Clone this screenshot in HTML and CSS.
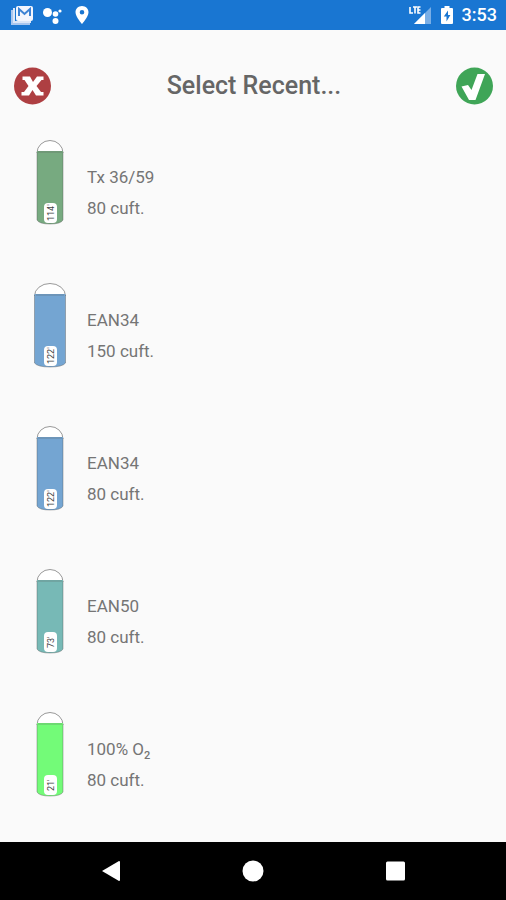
FILE: index.html
```html
<!DOCTYPE html>
<html lang="en">
<head>
<meta charset="utf-8">
<meta name="viewport" content="width=device-width, initial-scale=1">
<title>Select Recent</title>
<link rel="stylesheet" href="styles.css">
</head>
<body>
<div class="status">
  <div class="status-icons">
    <svg width="24" height="22" viewBox="0 0 24 22" aria-hidden="true">
      <path d="M2 6v14h18" fill="none" stroke="#a9c6ee" stroke-width="2"/>
      <path d="M4 4v14h17" fill="none" stroke="#dbe6f8" stroke-width="2"/>
      <rect x="6" y="2" width="17" height="15" rx="2" fill="#f4f6fd"/>
      <path d="M9 12V5l5.500 5L20 5v7" fill="none" stroke="#3d83d4" stroke-width="2"/>
    </svg>
    <svg width="20" height="20" viewBox="0 0 20 20" fill="#fff" aria-hidden="true">
      <circle cx="4.500" cy="7.500" r="4.500"/><circle cx="12.500" cy="9" r="2.800"/><circle cx="17" cy="6" r="1.600"/><circle cx="12.500" cy="16" r="3"/>
    </svg>
    <svg class="pin" width="14" height="20" viewBox="0 0 14 20" aria-hidden="true">
      <path fill="#fff" fill-rule="evenodd" d="M7 1C3.300 1 .5 3.800.5 7.300.5 12 7 19 7 19s6.500-7 6.500-11.700C13.500 3.800 10.700 1 7 1zm0 4a2.300 2.300 0 1 1 0 4.600A2.300 2.300 0 0 1 7 5z"/>
    </svg>
  </div>
  <div class="status-icons status-right">
    <svg width="24" height="20" viewBox="0 0 24 20" aria-label="LTE">
      <path d="M23 2v17H6z" fill="#79aee6"/>
      <path d="M17 8v11H6z" fill="#fff"/>
      <path d="M2 2v6h3M5 2h4M7 2v6.500M12.500 2H10v6h2.500M10 5h2.500" fill="none" stroke="#fff" stroke-width="1.600"/>
    </svg>
    <svg class="battery" width="12" height="20" viewBox="0 0 12 20" aria-hidden="true">
      <path d="M3.500 1h5v2H11q1 0 1 1v14q0 1-1 1H1q-1 0-1-1V4q0-1 1-1h2.500z" fill="#fff"/>
      <path d="M7 5.500L2.800 11.500h2.700V16.500L9.400 10H7z" fill="#1976d2"/>
    </svg>
    <span class="clock">3:53</span>
  </div>
</div>
<main>
  <header class="header">
    <button class="round" aria-label="Cancel">
      <svg width="38" height="38" viewBox="0 0 38 38"><circle cx="18.500" cy="19" r="18.500" fill="#ae3f42"/>
      <path d="M8.500 9.500H16l3 5.500 4-5.500h6.500V13h-2L22.500 19l4.500 6h2.500v3.500H22L18.500 23 15 28.500H7.500V25H10l4.500-6L10.500 13h-2z" fill="#fff"/></svg>
    </button>
    <h1>Select Recent...</h1>
    <button class="round" aria-label="Confirm">
      <svg width="38" height="38" viewBox="0 0 38 38"><circle cx="18.500" cy="19" r="18.500" fill="#3fa557"/>
      <path d="M5.500 19.500l6.500-1.500 3.500 5L21.500 7h7.500L19.500 33H13z" fill="#fff"/></svg>
    </button>
  </header>
  <ul class="list">
    <li class="item">
      <svg class="tank green" width="34" height="86" viewBox="0 0 34 86">
        <path class="shell" d="M4 13a13 12.500 0 0 1 26 0"/><path class="gas" d="M4 11h26v69q-2 4-13 4T4 80z"/><path class="edge" d="M5 12h24M4 12v68q2 4 13 4t13-4V12"/>
        <rect class="tag" x="11" y="63" width="13" height="20" rx="4"/><text class="depth" transform="translate(21 81) rotate(-90)">114'</text>
      </svg>
      <div class="info"><div>Tx 36/59</div><div>80 cuft.</div></div>
    </li>
    <li class="item">
      <svg class="tank blue" width="34" height="86" viewBox="0 0 34 86">
        <path class="shell" d="M1.500 13a15.500 12.500 0 0 1 31 0"/><path class="gas" d="M1.500 11h31v69q-3 4-15.500 4T1.500 80z"/><path class="edge" d="M3 12h28M1.500 12v68q3 4 15.500 4t15.500-4V12"/>
        <rect class="tag" x="11" y="63" width="13" height="20" rx="4"/><text class="depth" transform="translate(21 81) rotate(-90)">122'</text>
      </svg>
      <div class="info"><div>EAN34</div><div>150 cuft.</div></div>
    </li>
    <li class="item">
      <svg class="tank blue" width="34" height="86" viewBox="0 0 34 86">
        <path class="shell" d="M4 13a13 12.500 0 0 1 26 0"/><path class="gas" d="M4 11h26v69q-2 4-13 4T4 80z"/><path class="edge" d="M5 12h24M4 12v68q2 4 13 4t13-4V12"/>
        <rect class="tag" x="11" y="63" width="13" height="20" rx="4"/><text class="depth" transform="translate(21 81) rotate(-90)">122'</text>
      </svg>
      <div class="info"><div>EAN34</div><div>80 cuft.</div></div>
    </li>
    <li class="item">
      <svg class="tank teal" width="34" height="86" viewBox="0 0 34 86">
        <path class="shell" d="M4 13a13 12.500 0 0 1 26 0"/><path class="gas" d="M4 11h26v69q-2 4-13 4T4 80z"/><path class="edge" d="M5 12h24M4 12v68q2 4 13 4t13-4V12"/>
        <rect class="tag" x="11" y="63" width="13" height="20" rx="4"/><text class="depth" transform="translate(21 79) rotate(-90)">73'</text>
      </svg>
      <div class="info"><div>EAN50</div><div>80 cuft.</div></div>
    </li>
    <li class="item">
      <svg class="tank lime" width="34" height="86" viewBox="0 0 34 86">
        <path class="shell" d="M4 13a13 12.500 0 0 1 26 0"/><path class="gas" d="M4 11h26v69q-2 4-13 4T4 80z"/><path class="edge" d="M5 12h24M4 12v68q2 4 13 4t13-4V12"/>
        <rect class="tag" x="11" y="63" width="13" height="20" rx="4"/><text class="depth" transform="translate(21 79) rotate(-90)">21'</text>
      </svg>
      <div class="info"><div>100% O<sub>2</sub></div><div>80 cuft.</div></div>
    </li>
  </ul>
</main>
<nav class="nav">
  <button aria-label="Back"><svg width="22" height="22" viewBox="0 0 22 22"><path d="M2 11L19 1q1 0 1 1v18q0 1-1 1z" fill="#fff"/></svg></button>
  <button aria-label="Home"><svg width="22" height="22" viewBox="0 0 22 22"><circle cx="11" cy="11" r="10.500" fill="#fff"/></svg></button>
  <button aria-label="Overview"><svg width="22" height="22" viewBox="0 0 22 22"><rect x="2" y="1.500" width="19" height="19" rx="1.500" fill="#fff"/></svg></button>
</nav>
</body>
</html>
```
FILE: styles.css
```css
* { box-sizing: border-box; }
body {
  margin: 0;
  min-height: 100vh;
  display: flex;
  flex-direction: column;
  background: #fafafa;
  color: #757575;
  font-family: Roboto, "Liberation Sans", sans-serif;
}
svg { display: block; flex: none; }
button { padding: 0; border: 0; background: none; }
.status {
  display: flex;
  align-items: center;
  justify-content: space-between;
  height: 30px;
  padding: 0 9px 0 10px;
  background: #1976d2;
}
.status-icons { display: flex; align-items: center; gap: 9px; }
.pin { margin-left: 3px; }
.clock { color: #fff; font-size: 18px; font-weight: 500; line-height: 30px; }
main { flex: 1; }
.header {
  display: flex;
  align-items: center;
  justify-content: space-between;
  padding: 37px 12px 0 14px;
}
h1 { margin: 0; font-size: 25px; font-weight: 500; line-height: 38px; color: #666; }
.round { border-radius: 50%; }
.list { list-style: none; margin: 0; padding: 35px 33px 0; }
.item { display: flex; gap: 20px; height: 143px; }
.item:last-child { height: 86px; }
.info { padding-top: 22px; font-size: 17px; line-height: 31px; }
.info sub { font-size: 11px; font-weight: 500; line-height: 0; }
.shell { fill: #fff; stroke: #999; }
.edge { fill: none; stroke: #555; stroke-opacity: .4; }
.tag { fill: #fff; }
.depth { font-size: 9px; fill: #444; }
.green .gas { fill: #77aa80; }
.blue .gas { fill: #74a5d2; }
.teal .gas { fill: #77b9b6; }
.lime .gas { fill: #73fb78; }
.nav {
  display: grid;
  grid-template-columns: repeat(3, 1fr);
  height: 58px;
  padding: 0 40px;
  background: #000;
}
.nav button { display: flex; align-items: center; justify-content: center; }
```
